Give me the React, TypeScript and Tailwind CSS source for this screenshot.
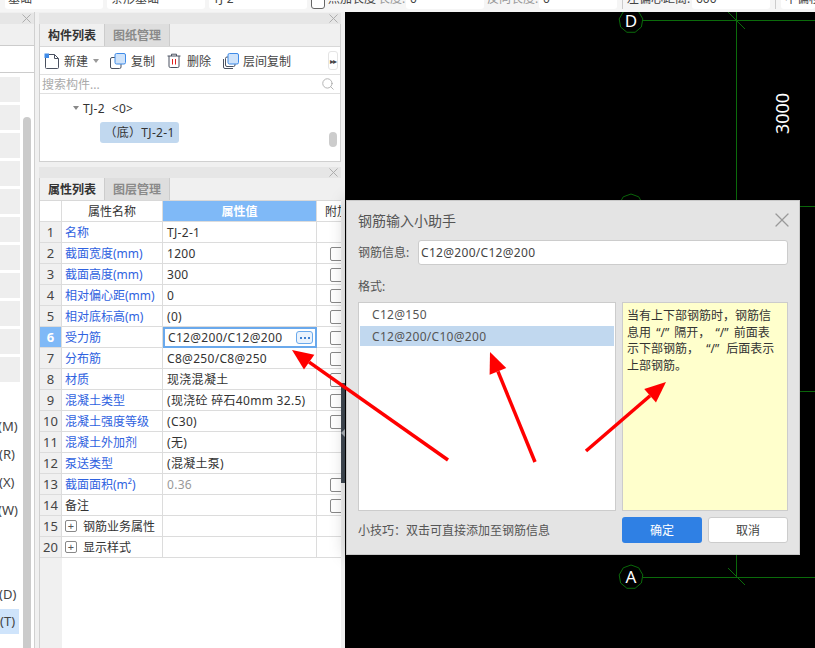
import React from 'react';
import { Search, X } from 'lucide-react';

const FONT = "font-['Noto_Sans','Noto_Sans_CJK_SC',sans-serif]";

const rows = [
  { no: '1', name: '名称', value: 'TJ-2-1', blue: true },
  { no: '2', name: '截面宽度(mm)', value: '1200', blue: true, check: true },
  { no: '3', name: '截面高度(mm)', value: '300', blue: true, check: true },
  { no: '4', name: '相对偏心距(mm)', value: '0', blue: true, check: true },
  { no: '5', name: '相对底标高(m)', value: '(0)', blue: true, check: true },
  { no: '6', name: '受力筋', value: 'C12@200/C12@200', blue: true, check: true, active: true },
  { no: '7', name: '分布筋', value: 'C8@250/C8@250', blue: true, check: true },
  { no: '8', name: '材质', value: '现浇混凝土', blue: true, check: true },
  { no: '9', name: '混凝土类型', value: '(现浇砼 碎石40mm 32.5)', blue: true, check: true },
  { no: '10', name: '混凝土强度等级', value: '(C30)', blue: true, check: true },
  { no: '11', name: '混凝土外加剂', value: '(无)', blue: true },
  { no: '12', name: '泵送类型', value: '(混凝土泵)', blue: true },
  { no: '13', name: '截面面积(m²)', value: '0.36', blue: true, check: true, muted: true },
  { no: '14', name: '备注', value: '', check: true },
  { no: '15', name: '钢筋业务属性', value: '', group: true },
  { no: '20', name: '显示样式', value: '', group: true },
];

const Arrow = ({ x1, y1, x2, y2 }: { x1: number; y1: number; x2: number; y2: number }) => {
  const len = Math.hypot(x2 - x1, y2 - y1);
  const ux = (x2 - x1) / len;
  const uy = (y2 - y1) / len;
  const bx = x2 - ux * 21;
  const by = y2 - uy * 21;
  const head = `${x2},${y2} ${bx - uy * 9},${by + ux * 9} ${bx + uy * 9},${by - ux * 9}`;
  return (
    <g>
      <line x1={x1} y1={y1} x2={bx} y2={by} stroke="#ff0000" strokeWidth="3.5" />
      <polygon points={head} fill="#ff0000" />
    </g>
  );
};

const AxisMark = ({ cx, cy, label }: { cx: number; cy: number; label: string }) => {
  const pts = Array.from({ length: 9 }, (_, i) => {
    const a = ((i * 40 - 90) * Math.PI) / 180;
    return `${cx + Math.cos(a) * 12},${cy + Math.sin(a) * 12}`;
  }).join(' ');
  return (
    <g>
      <polygon points={pts} fill="none" stroke="#0b6b0b" strokeWidth="1" />
      <text x={cx} y={cy + 6} textAnchor="middle" fill="#ffffff" fontSize="17" fontFamily="Noto Sans">
        {label}
      </text>
    </g>
  );
};

const PanelHead = () => (
  <div className="h-[11px] bg-[#e6e6e6] flex items-center justify-end shrink-0">
    <X className="w-[15px] h-[15px] shrink-0 text-[#aaa]" strokeWidth={1.5} />
  </div>
);

const Tabs = ({ a, b }: { a: string; b: string }) => (
  <div className="h-[23px] flex shrink-0 bg-[#f0f0f0] border-b border-[#d8d8d8] font-bold text-[12px] leading-[23px]">
    <div className="w-[65px] text-center text-[#333] border-r border-[#ccc]">{a}</div>
    <div className="w-[65px] text-center text-[#8a8a8a] bg-[#dedede] border-r border-[#ccc]">{b}</div>
  </div>
);

const NewIcon = () => (
  <svg width="16" height="16" viewBox="0 0 16 16" fill="none">
    <path d="M3 1.5h7.5l4 4v9a1 1 0 0 1-1 1h-11a1 1 0 0 1-1-1V5" stroke="#4a5160" />
    <path d="M10.5 1.5v4h4" stroke="#4a5160" />
    <rect x="0.5" y="0.5" width="4.5" height="4.5" fill="#3f8be8" />
  </svg>
);

const CopyIcon = () => (
  <svg width="16" height="16" viewBox="0 0 16 16" fill="none">
    <rect x="0.5" y="4.5" width="10.5" height="11" rx="1.5" stroke="#4a5160" fill="#fff" />
    <rect x="5" y="0.5" width="10.5" height="10.5" rx="1.5" stroke="#3f8be8" fill="#cfe3fa" />
  </svg>
);

const TrashIcon = () => (
  <svg width="14" height="15" viewBox="0 0 14 15" fill="none">
    <path d="M0.5 3h13M4.5 3V1.2h5V3M2 3v10.2a1.3 1.3 0 0 0 1.3 1.3h7.4a1.3 1.3 0 0 0 1.3-1.3V3" stroke="#4a5160" />
    <path d="M5.5 6v5.5M8.5 6v5.5" stroke="#e02020" />
  </svg>
);

const LayerCopyIcon = () => (
  <svg width="16" height="16" viewBox="0 0 16 16" fill="none">
    <path d="M0.5 6v8a1.5 1.5 0 0 0 1.5 1.5h8" stroke="#4a5160" />
    <rect x="2.5" y="4" width="9.5" height="9.5" rx="1.5" stroke="#4a5160" fill="#fff" />
    <rect x="5" y="0.5" width="10.5" height="10.5" rx="1.5" stroke="#3f8be8" fill="#cfe3fa" />
  </svg>
);

export default function App() {
  return (
    <div lang="zh-CN" className={`${FONT} relative w-[815px] h-[648px] overflow-hidden bg-[#f0f0f0] text-[12px] text-[#333] flex flex-col`}>
      {/* top property bar, cut off by the window */}
      <div className="h-3 shrink-0 overflow-hidden flex items-end pb-[3px] bg-[#f5f5f5]">
        <div className="flex items-center w-full text-[#444] leading-[20px]">
          <div className="ml-[5px] w-[98px] h-5 bg-white rounded-[3px] pl-[3px]">基础</div>
          <div className="ml-1 w-[98px] h-5 bg-white rounded-[3px] pl-1">条形基础</div>
          <div className="ml-1 w-[98px] h-5 bg-white rounded-[3px] pl-1">TJ-2</div>
          <div className="ml-1 w-[14px] h-5 bg-white border border-[#666] rounded-[3px]" />
          <span className="ml-[3px] w-[50px] whitespace-nowrap">点加长度</span>
          <span className="w-[28px] text-[#999] whitespace-nowrap">长度:</span>
          <div className="w-[78px] h-5 bg-white rounded-[3px] pl-1">0</div>
          <span className="ml-[3px] w-[52px] text-[#999] whitespace-nowrap">反向长度:</span>
          <div className="w-[78px] h-5 bg-white rounded-[3px] pl-1">0</div>
          <div className="ml-[5px] w-px h-5 bg-[#ccc]" />
          <span className="ml-[4px] w-[65px] whitespace-nowrap">左偏心距离:</span>
          <div className="w-[78px] h-5 bg-white rounded-[3px] pl-1">600</div>
          <div className="ml-[5px] w-px h-5 bg-[#ccc]" />
          <div className="ml-[5px] flex-1 h-5 bg-white rounded-[3px] pl-1 whitespace-nowrap overflow-hidden">不偏移</div>
        </div>
      </div>

      <div className="flex-1 flex min-h-0">
        {/* left drawer, mostly off screen */}
        <div className="w-[35px] shrink-0 flex flex-col border-r border-[#d0d0d0] bg-white">
          <div className="h-px bg-[#f0f0f0]" />
          <PanelHead />
          <div className="h-[22px] bg-[#f0f0f0] border-b border-[#ccc]" />
          <div className="h-[27px] border-b border-[#ccc]" />
          <div className="flex-1 flex min-h-0 overflow-hidden">
            <div className="w-[20px] shrink-0 flex flex-col">
              <div className="flex flex-col gap-[3px] pt-1">
                {Array.from({ length: 11 }, (_, i) => (
                  <div key={i} className="h-[25px] bg-[#eeeeee]" />
                ))}
              </div>
              <div className="mt-[30px] flex flex-col items-start text-[13px] leading-[28px] text-[#444] whitespace-nowrap">
                <div className="-ml-[2px]">(M)</div>
                <div className="-ml-px">(R)</div>
                <div className="-ml-px">(X)</div>
                <div className="-ml-[2px]">(W)</div>
                <div className="h-[56px]" />
                <div className="-ml-px">(D)</div>
                <div className="mt-px w-[20px] h-[25px] leading-[25px] bg-[#cfe4fb] -ml-px pl-px">(T)</div>
              </div>
            </div>
            <div className="ml-[3px] w-2 mt-[44px] bg-[#cbcbcb] rounded-t-[4px]" />
          </div>
        </div>
        <div className="w-1 shrink-0" />

        {/* component and property panels */}
        <div className="w-[302px] shrink-0 flex flex-col">
          <div className="h-px" />
          <PanelHead />
          <div className="border-x border-b border-[#d0d0d0] flex flex-col bg-white h-[138px]">
            <Tabs a="构件列表" b="图纸管理" />
            <div className="h-[28px] shrink-0 flex items-center border-b border-[#e0e0e0] text-[#444] relative">
              <div className="ml-[4px]"><NewIcon /></div>
              <span className="ml-[4px] pt-[2px]">新建</span>
              <div className="ml-[5px] w-0 h-0 border-x-[3px] border-x-transparent border-t-[4px] border-t-[#999]" />
              <div className="ml-[11px]"><CopyIcon /></div>
              <span className="ml-[5px] pt-[2px]">复制</span>
              <div className="ml-[12px]"><TrashIcon /></div>
              <span className="ml-[6px] pt-[2px]">删除</span>
              <div className="ml-[12px]"><LayerCopyIcon /></div>
              <span className="ml-[4px] pt-[2px]">层间复制</span>
              <div className="ml-auto mr-[2px] w-[10px] h-[19px] bg-white border border-[#e4e4e4] rounded-[3px] text-[8px] leading-[17px] text-center text-[#444] tracking-[-1px]">▸▸</div>
            </div>
            <div className="h-[19px] shrink-0 flex items-center justify-between border-b border-[#e0e0e0] pl-[2px] pr-[5px] text-[#aaa]">
              <span className="pt-[2px]">搜索构件...</span>
              <Search className="w-[14px] h-[14px] text-[#aaa]" strokeWidth={1.5} />
            </div>
            <div className="flex-1 relative pl-[33px] pt-[5px]">
              <div className="flex items-center h-[18px]">
                <div className="w-0 h-0 border-x-[3.5px] border-x-transparent border-t-[4px] border-t-[#888]" />
                <span className="ml-[4px] pt-[2px] whitespace-pre tracking-[0.3px]">TJ-2  &lt;0&gt;</span>
              </div>
              <div className="ml-[27px] mt-[5px] w-[79px] h-[21px] bg-[#c1d8ef] rounded-[3px] leading-[21px] text-center whitespace-nowrap tracking-[0.3px]">（底）TJ-2-1</div>
              <div className="absolute right-[3px] top-[38px] w-2 h-[15px] bg-[#cccccc] rounded-[4px]" />
            </div>
          </div>
          <div className="h-[5px] shrink-0" />
          <PanelHead />
          <div className="flex-1 min-h-0 border-l border-[#d0d0d0] flex flex-col overflow-hidden bg-white">
            <Tabs a="属性列表" b="图层管理" />
            <div className="flex h-[21px] shrink-0 border-b border-[#dcdcdc] leading-[21px] w-[310px]">
              <div className="w-[22px] border-r border-[#dcdcdc]" />
              <div className="w-[101px] text-center border-r border-[#dcdcdc]">属性名称</div>
              <div className="w-[154px] text-center text-white font-bold bg-[#7fb9f7] border-r border-[#dcdcdc]">属性值</div>
              <div className="pl-2 whitespace-nowrap">附加</div>
            </div>
            {rows.map(row => (
              <div key={row.no} className="flex h-[21px] shrink-0 border-b border-[#dcdcdc] leading-[21px] w-[310px]">
                <div className={`w-[22px] text-center border-r border-[#dcdcdc] text-[13px] ${row.active ? 'bg-[#7fb9f7] text-white font-bold' : 'bg-[#f0f0f0] text-[#444]'}`}>{row.no}</div>
                <div className={`w-[101px] pl-[3px] border-r border-[#dcdcdc] whitespace-nowrap flex items-center ${row.blue ? 'text-[#2f62e0]' : ''}`}>
                  {row.group && (
                    <span className="w-[12px] h-[12px] mr-[6px] border border-[#888] rounded-[2px] text-[11px] leading-[9px] text-center text-[#555]">+</span>
                  )}
                  <span className="pt-px">{row.name}</span>
                </div>
                {row.active ? (
                  <div className="w-[154px] h-[21px] border-2 border-[#6aa9ec] bg-white pl-[3px] flex items-center justify-between pr-[2px] whitespace-nowrap tracking-[0.3px]">
                    {row.value}
                    <span className="w-[17px] h-[13px] border border-[#6aa9ec] bg-[#eaf3fd] rounded-[3px] flex items-center justify-center gap-[2px]">
                      <i className="w-[2px] h-[2px] bg-[#3f80d0]" />
                      <i className="w-[2px] h-[2px] bg-[#3f80d0]" />
                      <i className="w-[2px] h-[2px] bg-[#3f80d0]" />
                    </span>
                  </div>
                ) : (
                  <div className={`w-[154px] pl-[4px] border-r border-[#dcdcdc] whitespace-nowrap tracking-[0.3px] ${row.muted ? 'text-[#999]' : ''}`}>{row.value}</div>
                )}
                <div className="pl-[13px] pt-[4px]">
                  {row.check && <div className="w-[14px] h-[14px] border border-[#888] rounded-[2px] bg-white" />}
                </div>
              </div>
            ))}
            <div className="flex-1 w-[22px] bg-[#f0f0f0]" />
          </div>
        </div>

        {/* splitter */}
        <div className="w-1 shrink-0 pt-[371px]">
          <div className="h-[100px] bg-[#3f4852] flex items-center justify-center">
            <div className="w-0 h-0 border-y-[4px] border-y-transparent border-r-[4px] border-r-[#aab0b6]" />
          </div>
        </div>

        {/* drawing canvas */}
        <div className="flex-1 bg-black min-w-0">
          <svg className="block" width="470" height="636" viewBox="345 12 470 636">
            <g stroke="#0b6b0b" strokeWidth="1" shapeRendering="crispEdges">
              <line x1="643" y1="20.5" x2="815" y2="20.5" />
              <line x1="643" y1="206.5" x2="815" y2="206.5" />
              <line x1="643" y1="391.5" x2="815" y2="391.5" />
              <line x1="643" y1="577.5" x2="815" y2="577.5" />
              <line x1="736.5" y1="12" x2="736.5" y2="577" />
            </g>
            <g stroke="#0b6b0b" strokeWidth="1">
              <line x1="727" y1="11" x2="745" y2="29" />
              <line x1="728" y1="568" x2="745" y2="585" />
            </g>
            <AxisMark cx={631} cy={21} label="D" />
            <AxisMark cx={631} cy={206} label="C" />
            <AxisMark cx={631} cy={577} label="A" />
            <text x="789" y="113.5" transform="rotate(-90 789 113.5)" textAnchor="middle" fill="#ffffff" fontSize="18" fontFamily="Noto Sans">3000</text>
          </svg>
        </div>
      </div>

      {/* rebar helper dialog */}
      <div className="absolute left-[346px] top-[200px] w-[454px] h-[355px] bg-[#e4e4e4] border border-[#c8c8c8] shadow-[0_0_16px_rgba(0,0,0,0.22)] px-[11px] flex flex-col text-[#555]">
        <div className="h-[39px] shrink-0 flex items-center justify-between pb-[1px]">
          <span className="text-[14px]">钢筋输入小助手</span>
          <X className="w-[24px] h-[24px] mr-[-6px] text-[#999]" strokeWidth={1.2} />
        </div>
        <div className="h-[25px] shrink-0 flex items-center">
          <span className="w-[60px]">钢筋信息:</span>
          <div className="flex-1 h-full bg-white border border-[#ccc] rounded-[3px] pl-[2px] leading-[23px] text-[#444] tracking-[0.3px]">C12@200/C12@200</div>
        </div>
        <div className="h-[37px] shrink-0 pt-[13px] leading-[18px]">格式:</div>
        <div className="h-[209px] shrink-0 flex gap-[6px]">
          <div className="w-[258px] bg-white border border-[#ccc] p-px tracking-[0.3px]">
            <div className="h-[20px] pl-[12px] leading-[22px]">C12@150</div>
            <div className="mt-[2px] h-[20px] pl-[12px] leading-[22px] bg-[#c1d8ef]">C12@200/C10@200</div>
          </div>
          <div className="flex-1 bg-[#ffffcc] border border-[#ccc] pl-[4px] pt-[5px] leading-[16.7px] text-[#333] whitespace-nowrap">
            当有上下部钢筋时，钢筋信<br />
            息用 <span className="mx-[2px]">“/”</span> 隔开， <span className="mx-[2px]">“/”</span> 前面表<br />
            示下部钢筋， <span className="mx-[4px]">“/”</span> 后面表示<br />
            上部钢筋。
          </div>
        </div>
        <div className="mt-[6px] h-[26px] shrink-0 flex items-center">
          <span className="w-[264px] pt-[2px]">小技巧：双击可直接添加至钢筋信息</span>
          <div className="w-[80px] h-full bg-[#2f80e4] rounded-[3px] text-white text-center leading-[28px]">确定</div>
          <div className="ml-[6px] w-[80px] h-full bg-white border border-[#ccc] rounded-[3px] text-center leading-[26px] text-[#444]">取消</div>
        </div>
      </div>

      {/* red annotation arrows */}
      <svg className="absolute inset-0 pointer-events-none" width="815" height="648">
        <Arrow x1={448} y1={460} x2={292} y2={350} />
        <Arrow x1={535} y1={462} x2={490} y2={352} />
        <Arrow x1={586} y1={451} x2={666} y2={382} />
      </svg>
    </div>
  );
}
